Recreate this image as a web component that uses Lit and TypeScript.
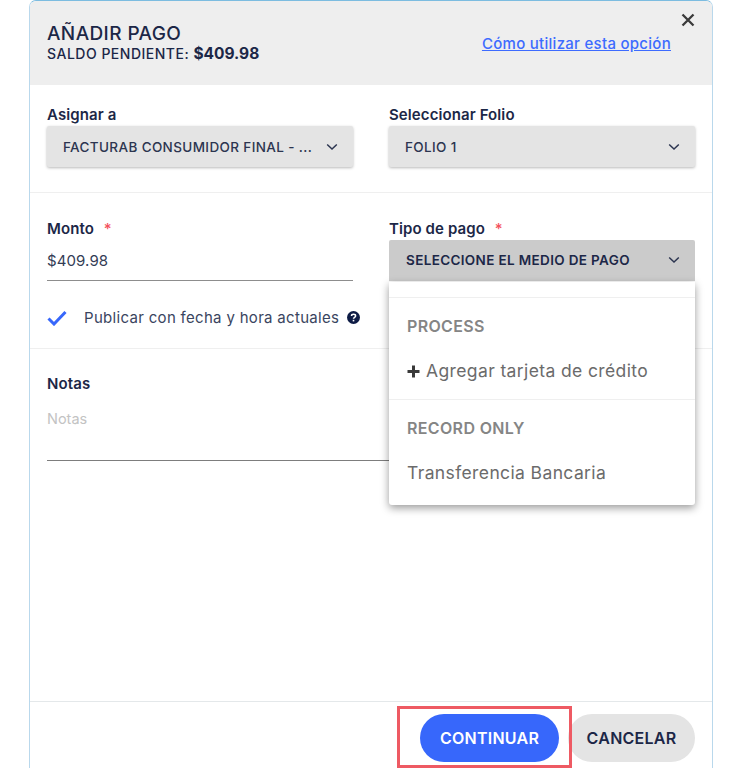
import { LitElement, css, html } from 'lit';
import { customElement } from 'lit/decorators.js';

const chevron = html`<svg class="chev" width="12" height="8" viewBox="0 0 12 8"><path d="M1.2 1.5 L6 6 L10.8 1.5" fill="none" stroke="#2c3550" stroke-width="1.5"/></svg>`;

@customElement('app-root')
export class AppRoot extends LitElement {
  static styles = css`
    :host {
      display: block;
      height: 768px;
      overflow: hidden;
      background: #fff;
      font-family: Inter, 'Liberation Sans', sans-serif;
      color: #1c2747;
    }
    .card {
      position: relative;
      box-sizing: border-box;
      margin-left: 29px;
      width: 684px;
      height: 780px;
      border: 1px solid #b9d8ec;
      border-top-color: #7cbce0;
      border-radius: 7px 7px 0 0;
      display: flex;
      flex-direction: column;
    }
    .head {
      height: 84px;
      box-sizing: border-box;
      background: #eeeeee;
      border-radius: 6px 6px 0 0;
      padding: 22px 41px 0 17px;
      display: flex;
      justify-content: space-between;
    }
    .title { font-size: 19px; font-weight: 500; line-height: 22px; letter-spacing: 0.4px; }
    .balance { font-size: 14px; font-weight: 500; line-height: 18px; letter-spacing: 0.5px; white-space: nowrap; }
    .balance b { font-size: 15.5px; font-weight: 700; letter-spacing: 0; }
    .help-link { color: #3d6bff; font-size: 15px; font-weight: 500; margin-top: 11px; text-decoration: underline; letter-spacing: 0.28px; white-space: nowrap; }
    .close { position: absolute; top: 12px; right: 17px; }
    .row { display: grid; grid-template-columns: 306px 306px; gap: 36px; padding: 0 17px; }
    .sec1 { height: 108px; box-sizing: border-box; padding-top: 20px; border-bottom: 1px solid #efefef; }
    .sec1 .label { height: 21px; }
    .sec2 { height: 156px; box-sizing: border-box; padding-top: 26px; border-bottom: 1px solid #efefef; position: relative; }
    .label { font-size: 15px; font-weight: 600; line-height: 19px; letter-spacing: 0.1px; height: 20px; white-space: nowrap; }
    .req { color: #f4515c; margin-left: 6px; font-weight: 500; }
    .select {
      height: 41px;
      box-sizing: border-box;
      background: #e4e4e4;
      border-radius: 2px;
      box-shadow: 0 1px 3px rgba(0, 0, 0, 0.28);
      padding: 0 15px 0 16px;
      display: flex;
      align-items: center;
      justify-content: space-between;
      font-size: 13.5px;
      font-weight: 500;
      letter-spacing: 0.37px;
      color: #2c3550;
      white-space: nowrap;
    }
    .select.open { background: #cbcbcb; box-shadow: none; margin-top: 1px; padding-left: 17px; padding-bottom: 2px; color: #1c2747; font-weight: 600; letter-spacing: 0.35px; border-radius: 2px 2px 0 0; }
    .amount { font-size: 15px; line-height: 18px; height: 41px; padding-top: 13px; box-sizing: border-box; color: #333c55; letter-spacing: 0.1px; }
    .line { height: 1px; background: #8d8d8d; }
    .check { display: flex; align-items: center; padding: 0 17px; margin-top: 27px; font-size: 15px; color: #3a4560; letter-spacing: 0.31px; white-space: nowrap; }
    .check .txt { margin-left: 17px; }
    .check .q { margin-left: 8px; }
    .sec3 { flex: none; height: 352px; box-sizing: border-box; padding: 25px 17px 0; }
    .ph { font-size: 14.5px; color: #c3c3c3; margin-top: 16px; line-height: 18px; }
    .notes-line { height: 1px; background: #7d7d7d; margin-top: 32px; width: 400px; }
    .foot {
      border-top: 1px solid #e4e8ea;
      height: 66px;
      box-sizing: border-box;
      padding: 12px 17px 0 0;
      display: flex;
      justify-content: flex-end;
      gap: 9px;
    }
    .btn {
      height: 48px;
      border-radius: 24px;
      display: flex;
      align-items: center;
      justify-content: center;
      font-size: 16px;
      font-weight: 600;
      letter-spacing: 0.25px;
    }
    .primary { width: 139px; background: #3767fb; color: #fff; }
    .secondary { width: 127px; background: #e4e4e4; color: #1c2747; }
    .menu {
      position: absolute;
      left: 359px;
      top: 281px;
      width: 306px;
      height: 223px;
      box-sizing: border-box;
      background: #fff;
      border-radius: 0 0 3px 3px;
      box-shadow: 0 3px 8px rgba(0, 0, 0, 0.4);
      padding-top: 15px;
      color: #6b6b6b;
    }
    .menu hr { border: 0; height: 1px; background: #efefef; margin: 0; }
    .menu hr.sep { margin-top: 18px; }
    .group { padding: 18px 18px 0; font-size: 16px; font-weight: 600; color: #858585; line-height: 20px; height: 20px; letter-spacing: 0.35px; }
    .item { padding: 25px 18px 0; font-size: 17.5px; line-height: 20px; height: 20px; display: flex; align-items: center; gap: 6px; letter-spacing: 0.38px; white-space: nowrap; }
    .highlight {
      position: absolute;
      left: 367px;
      top: 705px;
      width: 175px;
      height: 62px;
      box-sizing: border-box;
      border: 3px solid #ee5a63;
    }
  `;

  render() {
    return html`
      <div class="card">
        <div class="head">
          <div>
            <div class="title">AÑADIR PAGO</div>
            <div class="balance">SALDO PENDIENTE: <b>$409.98</b></div>
          </div>
          <div class="help-link">Cómo utilizar esta opción</div>
          <svg class="close" width="14" height="14" viewBox="0 0 14 14"><path d="M1.5 1.5 L12.5 12.5 M12.5 1.5 L1.5 12.5" stroke="#3a3a3a" stroke-width="2.3"/></svg>
        </div>
        <div class="row sec1">
          <div>
            <div class="label">Asignar a</div>
            <div class="select">FACTURAB CONSUMIDOR FINAL - ... ${chevron}</div>
          </div>
          <div>
            <div class="label">Seleccionar Folio</div>
            <div class="select">FOLIO 1 ${chevron}</div>
          </div>
        </div>
        <div class="sec2">
          <div class="row">
            <div>
              <div class="label">Monto <span class="req">*</span></div>
              <div class="amount">$409.98</div>
              <div class="line"></div>
            </div>
            <div>
              <div class="label">Tipo de pago <span class="req">*</span></div>
              <div class="select open">SELECCIONE EL MEDIO DE PAGO ${chevron}</div>
            </div>
          </div>
          <div class="check">
            <svg width="20" height="16" viewBox="0 0 20 16"><path d="M1.5 8.5 L7 14 L18.5 2" fill="none" stroke="#3767fb" stroke-width="3"/></svg>
            <span class="txt">Publicar con fecha y hora actuales</span>
            <svg class="q" width="13" height="13" viewBox="0 0 13 13"><circle cx="6.5" cy="6.5" r="6.5" fill="#0d1b45"/><path d="M4.5 5 C4.5 2.8 8.6 2.8 8.6 5 C8.6 6.4 6.5 6.2 6.5 7.8" fill="none" stroke="#fff" stroke-width="1.5"/><rect x="5.7" y="8.8" width="1.6" height="1.6" fill="#fff"/></svg>
          </div>
        </div>
        <div class="sec3">
          <div class="label">Notas</div>
          <div class="ph">Notas</div>
          <div class="notes-line"></div>
        </div>
        <div class="foot">
          <div class="btn primary">CONTINUAR</div>
          <div class="btn secondary">CANCELAR</div>
        </div>
        <div class="menu">
          <hr />
          <div class="group">PROCESS</div>
          <div class="item">
            <svg width="13" height="13" viewBox="0 0 13 13"><path d="M6.5 0.5 V12.5 M0.5 6.5 H12.5" stroke="#3a3a3a" stroke-width="3"/></svg>
            Agregar tarjeta de crédito
          </div>
          <hr class="sep" />
          <div class="group">RECORD ONLY</div>
          <div class="item">Transferencia Bancaria</div>
        </div>
        <div class="highlight"></div>
      </div>
    `;
  }
}
